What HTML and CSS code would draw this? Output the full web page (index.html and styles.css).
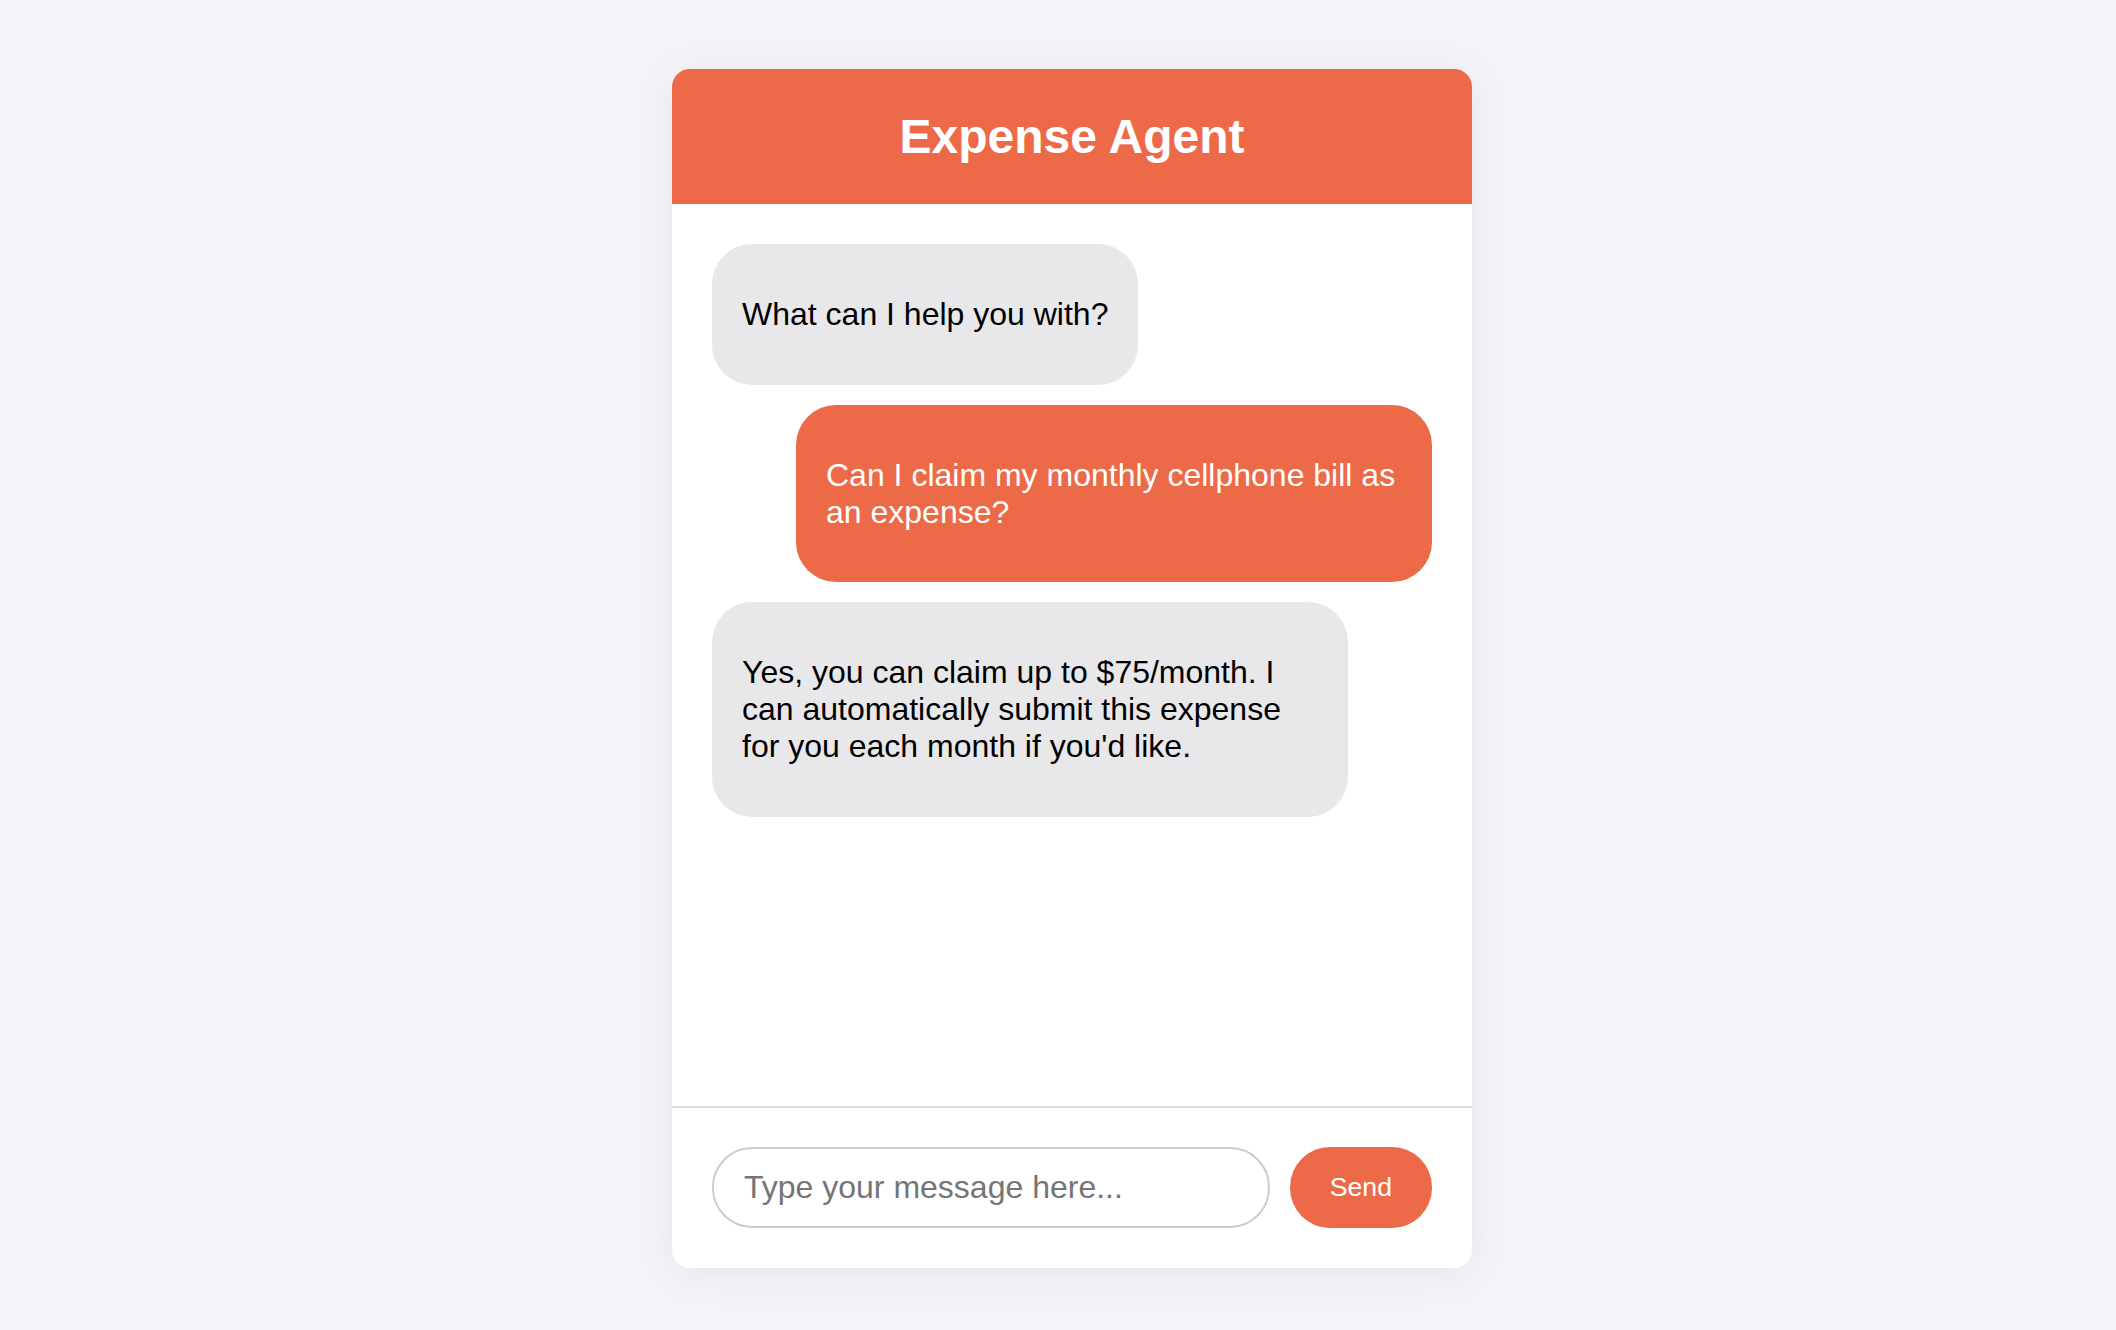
FILE: index.html
```html
<!DOCTYPE html>
<html lang="en">
<head>
<meta charset="utf-8">
<title>Expense Agent</title>
<link rel="stylesheet" href="styles.css">
</head>
<body>
<div class="chat">
  <header class="chat-header">
    <h1 class="chat-title">Expense Agent</h1>
  </header>
  <main class="messages">
    <div class="bubble bubble-agent"><p>What can I help you with?</p></div>
    <div class="bubble bubble-user"><p>Can I claim my monthly cellphone bill as an expense?</p></div>
    <div class="bubble bubble-agent"><p>Yes, you can claim up to $75/month. I can automatically submit this expense for you each month if you'd like.</p></div>
  </main>
  <footer class="composer">
    <input class="composer-input" type="text" placeholder="Type your message here...">
    <button class="composer-send" type="button">Send</button>
  </footer>
</div>
</body>
</html>
```

FILE: styles.css
```css
html, body {
  margin: 0;
  padding: 0;
}
body {
  background: #f4f4f8;
  font-family: "Liberation Sans", Arial, Helvetica, sans-serif;
  height: 1330px;
  padding-left: 28px;
  box-sizing: border-box;
  overflow: hidden;
}
.chat {
  width: 800px;
  height: 1199px;
  margin: 69px auto 0;
  background: #ffffff;
  border-radius: 18px;
  box-shadow: 0 6px 40px rgba(40, 40, 80, 0.08);
  display: flex;
  flex-direction: column;
  overflow: hidden;
}
.chat-header {
  background: #ed6a48;
  padding: 40px 0;
  text-align: center;
  flex: none;
}
.chat-title {
  margin: 0;
  color: #ffffff;
  font-size: 48px;
  font-weight: bold;
  line-height: 55px;
}
.messages {
  flex: 1;
  padding: 40px;
  display: flex;
  flex-direction: column;
  align-items: flex-start;
  gap: 20px;
  overflow: hidden;
}
.bubble {
  max-width: 576px;
  padding: 20px 30px;
  border-radius: 40px;
  font-size: 32px;
  line-height: 36.8px;
}
.bubble p {
  margin: 32px 0;
}
.bubble-agent {
  background: #e8e8ea;
  color: #000000;
}
.bubble-user {
  background: #ed6a48;
  color: #ffffff;
  align-self: flex-end;
}
.composer {
  flex: none;
  border-top: 2px solid #dddddd;
  padding: 39px 40px 40px;
  display: flex;
  gap: 20px;
}
.composer-input {
  flex: 1;
  min-width: 0;
  font-family: "Liberation Sans", Arial, Helvetica, sans-serif;
  font-size: 32px;
  padding: 20px 30px;
  border: 2px solid #cccccc;
  border-radius: 40px;
  outline: none;
  color: #000;
}
.composer-input::placeholder {
  color: #757575;
}
.composer-send {
  flex: none;
  font-family: "Liberation Sans", Arial, Helvetica, sans-serif;
  font-size: 26.67px;
  padding: 0 40px;
  border: none;
  border-radius: 40px;
  background: #ed6a48;
  color: #ffffff;
}
```
